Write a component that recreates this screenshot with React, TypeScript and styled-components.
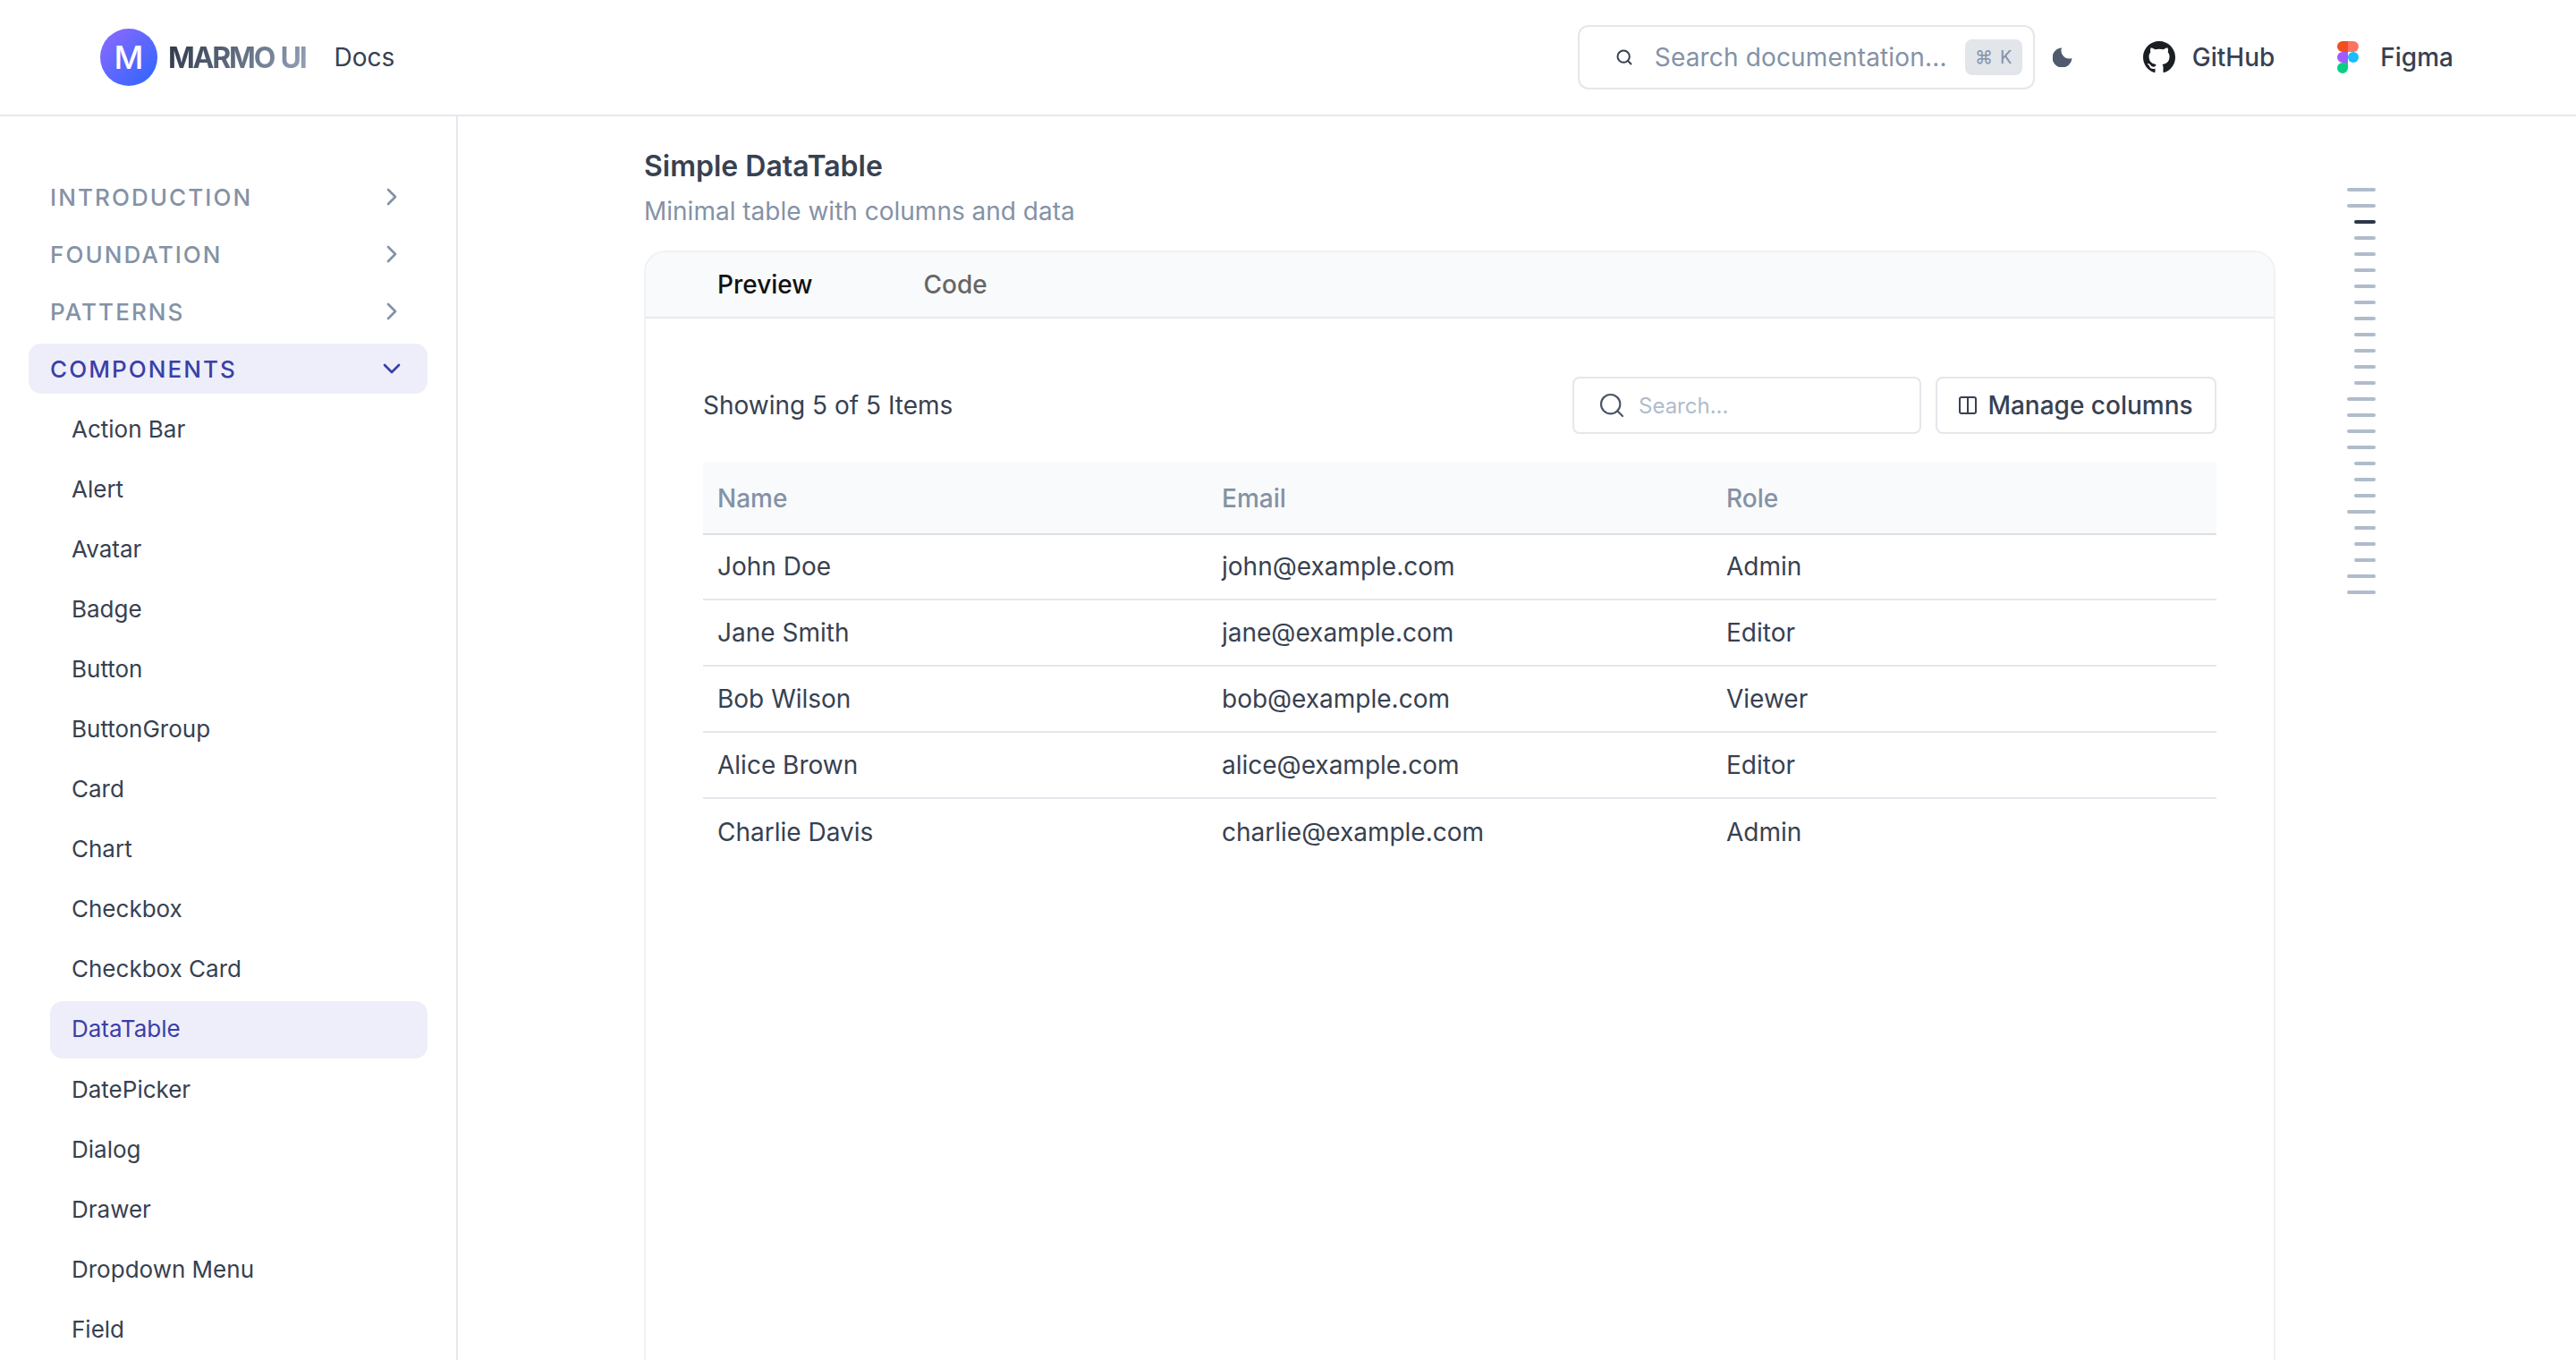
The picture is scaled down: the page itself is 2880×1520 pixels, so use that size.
import React from 'react';
import styled, { createGlobalStyle } from 'styled-components';
import { ChevronDown, ChevronRight, Columns2, Search } from 'lucide-react';
import { BsGithub } from 'react-icons/bs';

const GlobalStyle = createGlobalStyle`
  html, body {
    margin: 0;
    padding: 0;
    background: #fff;
    font-family: Inter, "Liberation Sans", sans-serif;
  }
  * {
    box-sizing: border-box;
  }
`;

const Page = styled.div`
  height: 100vh;
  overflow: hidden;
  display: flex;
  flex-direction: column;
  color: #374151;
`;

const Header = styled.header`
  flex: none;
  height: 130px;
  border-bottom: 2px solid #e6e6ec;
  display: flex;
  align-items: center;
  padding: 0 137px 0 112px;
`;

const LogoMark = styled.div`
  width: 64px;
  height: 64px;
  border-radius: 50%;
  background: linear-gradient(135deg, #9069ff 0%, #3a66ff 85%);
  color: #fff;
  font-size: 36px;
  font-weight: 500;
  display: flex;
  align-items: center;
  justify-content: center;
`;

const LogoText = styled.div`
  margin-left: 12px;
  font-size: 32px;
  font-weight: 700;
  letter-spacing: -2.2px;
  word-spacing: 2px;
  background: linear-gradient(115deg, #2d3748 0%, #94a3b8 100%);
  -webkit-background-clip: text;
  background-clip: text;
  color: transparent;
`;

const DocsLink = styled.div`
  margin-left: 32px;
  font-size: 28px;
  color: #374151;
`;

const HeaderRight = styled.div`
  margin-left: auto;
  display: flex;
  align-items: center;
`;

const DocSearch = styled.div`
  width: 511px;
  height: 72px;
  border: 2px solid #e6e6ec;
  border-radius: 12px;
  display: flex;
  align-items: center;
  padding: 0 12px 0 40px;
  color: #374151;
`;

const DocSearchText = styled.div`
  margin-left: 24px;
  font-size: 28px;
  letter-spacing: 0.16px;
  color: #8492a6;
  white-space: nowrap;
`;

const Kbd = styled.div`
  margin-left: auto;
  width: 64px;
  height: 40px;
  border-radius: 8px;
  background: #e2e5ea;
  color: #8492a6;
  font-size: 20px;
  display: flex;
  align-items: center;
  justify-content: center;
  gap: 8px;
`;

const MoonButton = styled.div`
  margin-left: 20px;
  width: 22px;
  height: 22px;
  color: #4f5b6d;
`;

const ExternalLink = styled.div<{ $gap: number; $left: number }>`
  margin-left: ${(p) => p.$left}px;
  display: flex;
  align-items: center;
  gap: ${(p) => p.$gap}px;
  font-size: 28px;
  font-weight: 500;
  color: #374151;
`;

const Body = styled.div`
  flex: 1;
  min-height: 0;
  display: flex;
`;

const Sidebar = styled.nav`
  flex: none;
  width: 512px;
  border-right: 2px solid #e6e6ec;
  padding: 62px 32px 0;
  display: flex;
  flex-direction: column;
  gap: 8px;
  overflow: hidden;
`;

const Section = styled.div<{ $open?: boolean }>`
  flex: none;
  height: 56px;
  border-radius: 14px;
  padding: 0 24px 0 24px;
  display: flex;
  align-items: center;
  justify-content: space-between;
  font-size: 26px;
  font-weight: 500;
  letter-spacing: 2.08px;
  color: ${(p) => (p.$open ? '#3b3fa8' : '#8492a6')};
  background: ${(p) => (p.$open ? '#eeeefa' : 'transparent')};
`;

const ItemList = styled.div`
  flex: none;
  padding-left: 24px;
  display: flex;
  flex-direction: column;
  gap: 3.1px;
`;

const Item = styled.div<{ $active?: boolean }>`
  flex: none;
  height: 64px;
  border-radius: 14px;
  padding: 0 24px 2px;
  display: flex;
  align-items: center;
  font-size: 26px;
  color: ${(p) => (p.$active ? '#3b3fa8' : '#374151')};
  background: ${(p) => (p.$active ? '#eeeefa' : 'transparent')};
`;

const Main = styled.main`
  flex: 1;
  min-width: 0;
  display: flex;
  padding-left: 208px;
`;

const Content = styled.div`
  flex: none;
  width: 1824px;
  padding-top: 34px;
  display: flex;
  flex-direction: column;
`;

const Title = styled.h2`
  margin: 0;
  font-size: 32px;
  line-height: 44px;
  font-weight: 600;
  color: #374151;
`;

const Subtitle = styled.p`
  margin: 6px 0 0;
  font-size: 28px;
  line-height: 44px;
  color: #8492a6;
`;

const Card = styled.div`
  margin-top: 22px;
  flex: 1;
  border: 2px solid #f0f1f4;
  border-bottom: none;
  border-radius: 24px 24px 0 0;
  display: flex;
  flex-direction: column;
`;

const TabBar = styled.div`
  flex: none;
  height: 74px;
  background: #f9fafb;
  border-bottom: 2px solid #e8eaee;
  border-radius: 22px 22px 0 0;
  display: flex;
  align-items: center;
  padding-left: 80px;
  gap: 124px;
`;

const Tab = styled.div<{ $active?: boolean }>`
  font-size: 28px;
  font-weight: 500;
  color: ${(p) => (p.$active ? '#111' : '#666')};
`;

const Preview = styled.div`
  padding: 65px 64px 0;
`;

const Toolbar = styled.div`
  display: flex;
  align-items: center;
`;

const Showing = styled.div`
  font-size: 28px;
  color: #374151;
`;

const FieldBox = styled.div`
  margin-left: auto;
  width: 390px;
  height: 64px;
  border: 2px solid #e6e6ec;
  border-radius: 8px;
  display: flex;
  align-items: center;
  padding-left: 26px;
  gap: 14px;
  color: #4a5568;
`;

const FieldText = styled.div`
  font-size: 24px;
  color: #b0bccb;
`;

const ColumnsButton = styled.div`
  margin-left: 16px;
  width: 314px;
  height: 64px;
  border: 2px solid #e6e6ec;
  border-radius: 8px;
  display: flex;
  align-items: center;
  justify-content: center;
  gap: 10px;
  padding-right: 2px;
  font-size: 28px;
  font-weight: 500;
  color: #374151;
`;

const Table = styled.div`
  margin-top: 32px;
`;

const Row = styled.div<{ $head?: boolean }>`
  display: grid;
  grid-template-columns: repeat(3, 1fr);
  align-items: center;
  height: ${(p) => (p.$head ? 81 : 74)}px;
  margin-bottom: ${(p) => (p.$head ? -1 : 0)}px;
  padding-bottom: ${(p) => (p.$head ? 0 : 1)}px;
  font-size: 28px;
  color: ${(p) => (p.$head ? '#8492a6' : '#374151')};
  font-weight: ${(p) => (p.$head ? 500 : 400)};
  background: ${(p) => (p.$head ? '#f9fafb' : 'transparent')};
  border-bottom: 2px solid ${(p) => (p.$head ? '#dedfe4' : '#e6e6ec')};

  &:last-child {
    border-bottom: none;
  }
`;

const Cell = styled.div`
  padding-left: 16px;
`;

const Toc = styled.div`
  flex: none;
  margin-left: 80px;
  width: 32px;
  padding-top: 80px;
  display: flex;
  flex-direction: column;
  align-items: flex-end;
  gap: 14px;
`;

const TocBar = styled.div<{ $long?: boolean; $active?: boolean }>`
  width: ${(p) => (p.$long ? 32 : 24)}px;
  height: 4px;
  border-radius: 2px;
  background: ${(p) => (p.$active ? '#2d3748' : '#b0bccb')};
`;

const sections = ['INTRODUCTION', 'FOUNDATION', 'PATTERNS'];

const items = [
  'Action Bar',
  'Alert',
  'Avatar',
  'Badge',
  'Button',
  'ButtonGroup',
  'Card',
  'Chart',
  'Checkbox',
  'Checkbox Card',
  'DataTable',
  'DatePicker',
  'Dialog',
  'Drawer',
  'Dropdown Menu',
  'Field',
];

const rows = [
  ['John Doe', 'john@example.com', 'Admin'],
  ['Jane Smith', 'jane@example.com', 'Editor'],
  ['Bob Wilson', 'bob@example.com', 'Viewer'],
  ['Alice Brown', 'alice@example.com', 'Editor'],
  ['Charlie Davis', 'charlie@example.com', 'Admin'],
];

// L = long bar, s = short bar, in page order
const tocPattern = 'LLsssssssssssLLLLsssLsssLL'.split('');

const FigmaLogo = () => (
  <svg width="24" height="36" viewBox="0 0 38 57">
    <path fill="#1ABCFE" d="M19 28.5a9.5 9.5 0 1 1 19 0 9.5 9.5 0 0 1-19 0z" />
    <path fill="#0ACF83" d="M0 47.5A9.5 9.5 0 0 1 9.5 38H19v9.5a9.5 9.5 0 1 1-19 0z" />
    <path fill="#FF7262" d="M19 0v19h9.5a9.5 9.5 0 1 0 0-19H19z" />
    <path fill="#F24E1E" d="M0 9.5A9.5 9.5 0 0 0 9.5 19H19V0H9.5A9.5 9.5 0 0 0 0 9.5z" />
    <path fill="#A259FF" d="M0 28.5A9.5 9.5 0 0 0 9.5 38H19V19H9.5A9.5 9.5 0 0 0 0 28.5z" />
  </svg>
);

export default function App() {
  return (
    <Page>
      <GlobalStyle />
      <Header>
        <LogoMark>M</LogoMark>
        <LogoText>MARMO UI</LogoText>
        <DocsLink>Docs</DocsLink>
        <HeaderRight>
          <DocSearch>
            <Search size={20} strokeWidth={2.4} />
            <DocSearchText>Search documentation...</DocSearchText>
            <Kbd>
              <span>⌘</span>
              <span>K</span>
            </Kbd>
          </DocSearch>
          <MoonButton>
            <svg width="22" height="22" viewBox="0 0 22 22" fill="currentColor">
              <path d="M10 .5A11 11 0 1 0 21.5 12 9 9 0 0 1 10 .5z" />
            </svg>
          </MoonButton>
          <ExternalLink $gap={19} $left={79}>
            <BsGithub size={36} color="#1b1f24" />
            GitHub
          </ExternalLink>
          <ExternalLink $gap={24} $left={70}>
            <FigmaLogo />
            Figma
          </ExternalLink>
        </HeaderRight>
      </Header>
      <Body>
        <Sidebar>
          {sections.map((s) => (
            <Section key={s}>
              {s}
              <ChevronRight size={32} strokeWidth={2} />
            </Section>
          ))}
          <Section $open>
            COMPONENTS
            <ChevronDown size={32} strokeWidth={2} />
          </Section>
          <ItemList>
            {items.map((i) => (
              <Item key={i} $active={i === 'DataTable'}>
                {i}
              </Item>
            ))}
          </ItemList>
        </Sidebar>
        <Main>
          <Content>
            <Title>Simple DataTable</Title>
            <Subtitle>Minimal table with columns and data</Subtitle>
            <Card>
              <TabBar>
                <Tab $active>Preview</Tab>
                <Tab>Code</Tab>
              </TabBar>
              <Preview>
                <Toolbar>
                  <Showing>Showing 5 of 5 Items</Showing>
                  <FieldBox>
                    <Search size={32} strokeWidth={1.6} />
                    <FieldText>Search...</FieldText>
                  </FieldBox>
                  <ColumnsButton>
                    <Columns2 size={24} strokeWidth={2} />
                    Manage columns
                  </ColumnsButton>
                </Toolbar>
                <Table>
                  <Row $head>
                    <Cell>Name</Cell>
                    <Cell>Email</Cell>
                    <Cell>Role</Cell>
                  </Row>
                  {rows.map((r) => (
                    <Row key={r[0]}>
                      {r.map((c) => (
                        <Cell key={c}>{c}</Cell>
                      ))}
                    </Row>
                  ))}
                </Table>
              </Preview>
            </Card>
          </Content>
          <Toc>
            {tocPattern.map((t, i) => (
              <TocBar key={i} $long={t === 'L'} $active={i === 2} />
            ))}
          </Toc>
        </Main>
      </Body>
    </Page>
  );
}
